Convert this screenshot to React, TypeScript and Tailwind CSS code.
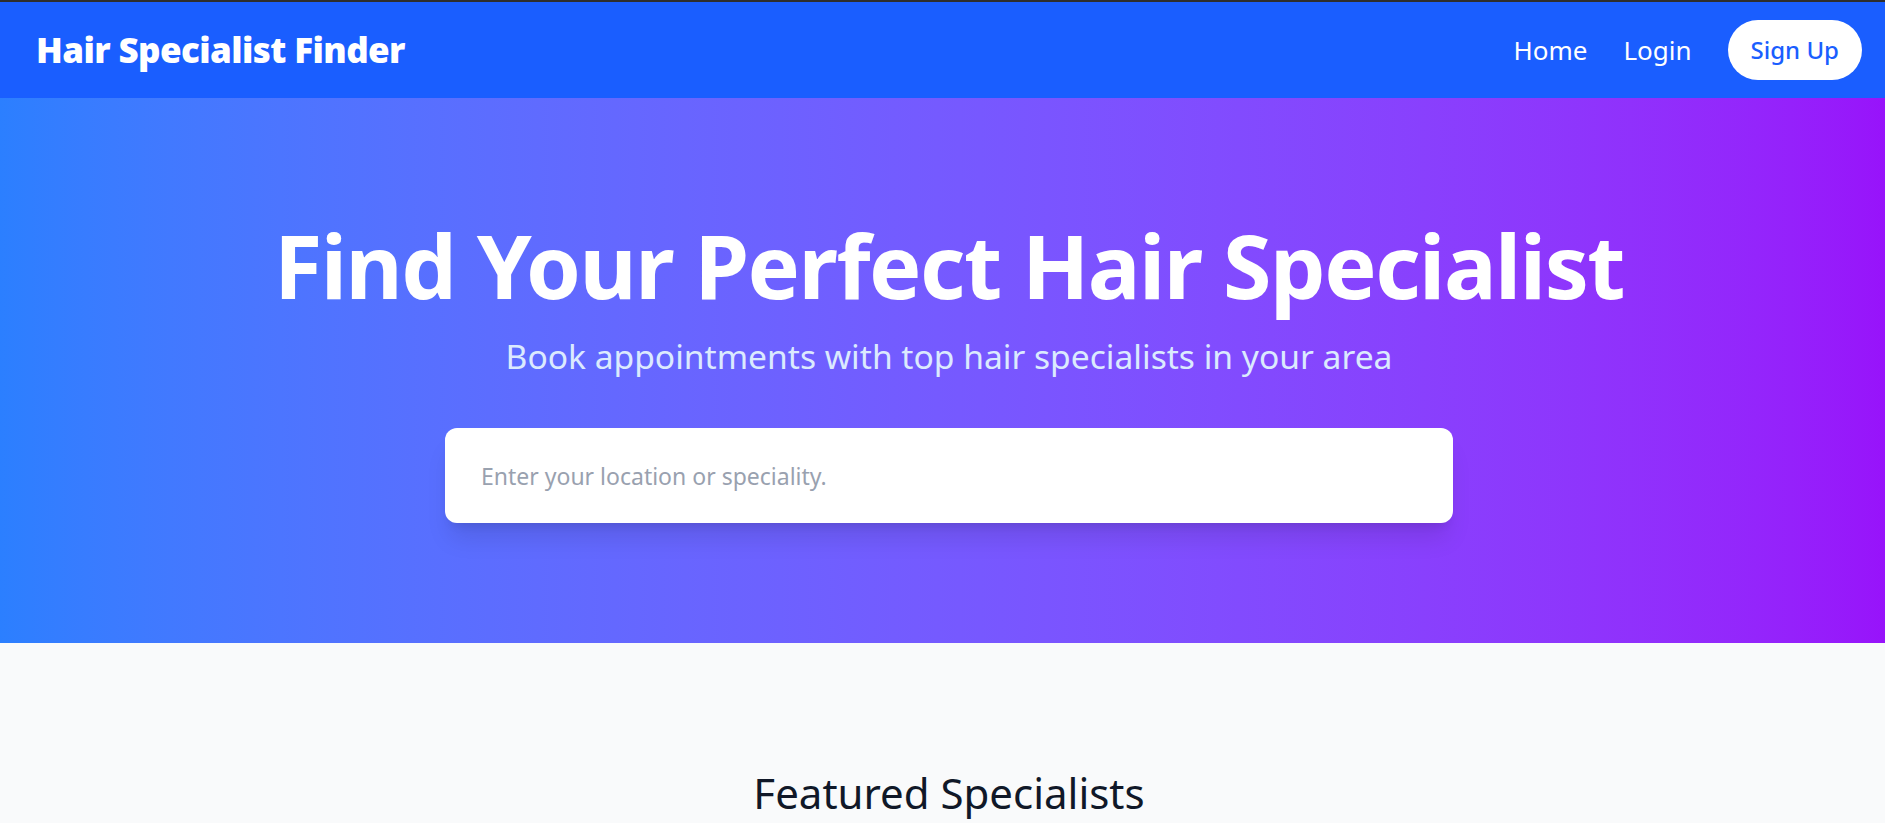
import React from "react";

const font = { fontFamily: '"Noto Sans", "Open Sans", Roboto, sans-serif' };

function Navbar() {
  return (
    <nav className="flex h-[96px] items-center justify-between bg-[#1a5eff] px-[36px]">
      <a href="#" className="text-[35px] font-black tracking-[-0.6px] text-white">
        Hair Specialist Finder
      </a>
      <div className="flex items-center">
        <a href="#" className="text-[26px] text-white">
          Home
        </a>
        <a href="#" className="ml-[36px] text-[26px] text-white">
          Login
        </a>
        <button className="ml-[36px] flex h-[60px] items-center rounded-full bg-white px-[23px] text-[24px] font-medium text-[#1a5eff]">
          Sign Up
        </button>
      </div>
    </nav>
  );
}

function Hero() {
  return (
    <section className="bg-linear-to-r from-blue-500 to-purple-600 pt-[122px] pb-[120px] text-center text-white">
      <h1 className="text-[88px] leading-[90px] font-bold tracking-[-1.5px]">
        Find Your Perfect Hair Specialist
      </h1>
      <p className="mt-[22px] text-[33.6px] leading-[48px] text-blue-100">
        Book appointments with top hair specialists in your area
      </p>
      <div className="mx-auto mt-[48px] w-[1008px]">
        <input
          type="text"
          placeholder="Enter your location or speciality."
          className="h-[95px] w-full rounded-[12px] bg-white px-[36px] text-[23px] text-gray-800 shadow-xl outline-none placeholder:text-gray-400"
        />
      </div>
    </section>
  );
}

export default function App() {
  return (
    <div className="min-h-screen overflow-x-hidden border-t-2 border-[#2e2e2e] bg-gray-50" style={font}>
      <div className="w-[1898px]">
        <Navbar />
        <Hero />
        <section className="pt-[123px] pb-[120px]">
          <h2 className="text-center text-[42px] leading-[54px] text-gray-900">
            Featured Specialists
          </h2>
        </section>
      </div>
    </div>
  );
}
